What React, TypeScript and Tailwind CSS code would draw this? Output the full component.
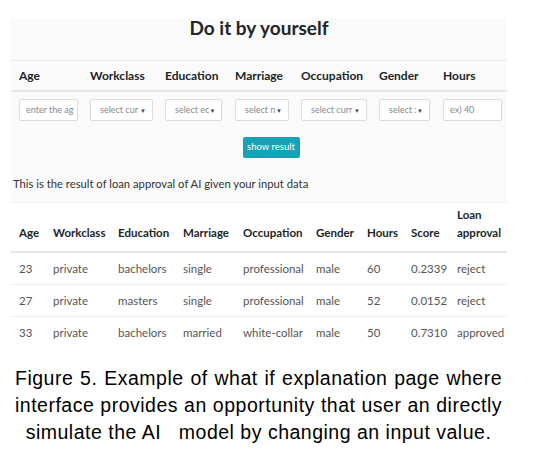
const font = "font-['Lato','Noto_Sans',sans-serif]";

const inputCols = [
  { label: "Age", w: "w-[59px]", text: "enter the ag", select: false },
  { label: "Workclass", w: "w-[63px]", text: "select cur", select: true },
  { label: "Education", w: "w-[57px]", text: "select ec", select: true },
  { label: "Marriage", w: "w-[54px]", text: "select n", select: true },
  { label: "Occupation", w: "w-[66px]", text: "select curr", select: true },
  { label: "Gender", w: "w-[51px]", text: "select :", select: true },
  { label: "Hours", w: "w-[59px]", text: "ex) 40", select: false },
];

const heads = ["Age", "Workclass", "Education", "Marriage", "Occupation", "Gender", "Hours", "Score"];

const rows = [
  ["23", "private", "bachelors", "single", "professional", "male", "60", "0.2339", "reject"],
  ["27", "private", "masters", "single", "professional", "male", "52", "0.0152", "reject"],
  ["33", "private", "bachelors", "married", "white-collar", "male", "50", "0.7310", "approved"],
];

const inputGrid = "grid grid-cols-[71px_75px_70px_66px_78px_64px_64px]";
const tableGrid = "grid grid-cols-[34px_65px_65px_60px_73px_51px_44px_46px_50px]";

export default function App() {
  return (
    <div className="w-[557px] h-[453px] bg-white overflow-hidden">
      <div className={`${font} text-[#212529]`}>
        <div className="h-[18px]" />
        <div className="ml-[11px] w-[496px] bg-[#fafafa]">
          <h1 className="h-[42px] pt-[1px] text-center text-[19px] leading-[18px] font-bold">Do it by yourself</h1>
          <div className={`${inputGrid} border-t border-[#ececec] border-b-2 border-b-[#e6e6e6] pl-[8px] h-[32px] items-center`}>
            {inputCols.map((c) => (
              <div key={c.label} className="text-[12px] font-bold">{c.label}</div>
            ))}
          </div>
          <div className={`${inputGrid} pl-[8px] pt-[7px]`}>
            {inputCols.map((c) => (
              <div
                key={c.label}
                className={`${c.w} h-[22px] bg-white border border-[#dcdcdc] rounded-[2px] flex items-center justify-between pl-[6px] pr-[6px] text-[9px] text-[#8a8a8a] overflow-hidden whitespace-nowrap`}
              >
                <span className={c.select ? "pl-[3px]" : ""}>{c.text}</span>
                {c.select && <span className="text-[6px] text-[#444]">▼</span>}
              </div>
            ))}
          </div>
          <div className="flex justify-center pt-[16px] pl-[24px]">
            <div className="w-[57px] h-[21px] rounded-[2px] bg-[#17a2b8] text-white text-[9.5px] flex items-center justify-center">
              show result
            </div>
          </div>
          <div className="h-[44px] pt-[19px] pl-[2px] text-[11.25px] leading-[14px] text-[#333]">
            This is the result of loan approval of AI given your input data
          </div>
        </div>
        <div className="ml-[11px] w-[496px] border-t border-[#f0f0f0]">
          <div className={`${tableGrid} pl-[8px] h-[50px] items-end pb-[9px] border-b-2 border-[#e6e6e6] text-[11.5px] font-bold leading-[18px]`}>
            {heads.map((h) => (
              <div key={h}>{h}</div>
            ))}
            <div>
              Loan
              <br />
              approval
            </div>
          </div>
          {rows.map((r, i) => (
            <div
              key={i}
              className={`${tableGrid} pl-[8px] h-[32px] items-center text-[11.5px] text-[#555] whitespace-nowrap ${i < 2 ? "border-b border-[#ececec]" : ""}`}
            >
              {r.map((v, j) => (
                <div key={j}>{v}</div>
              ))}
            </div>
          ))}
        </div>
      </div>
      <div className="mt-[16px] ml-[15px] w-[487px] text-[19.5px] leading-[27px] tracking-[0.5px] text-black font-['Liberation_Sans',Arial,sans-serif]">
        <p className="text-justify [text-align-last:justify]">Figure 5. Example of what if explanation page where</p>
        <p className="text-justify [text-align-last:justify]">interface provides an opportunity that user an directly</p>
        <p className="text-center">simulate the AI&nbsp;&nbsp; model by changing an input value.</p>
      </div>
    </div>
  );
}
